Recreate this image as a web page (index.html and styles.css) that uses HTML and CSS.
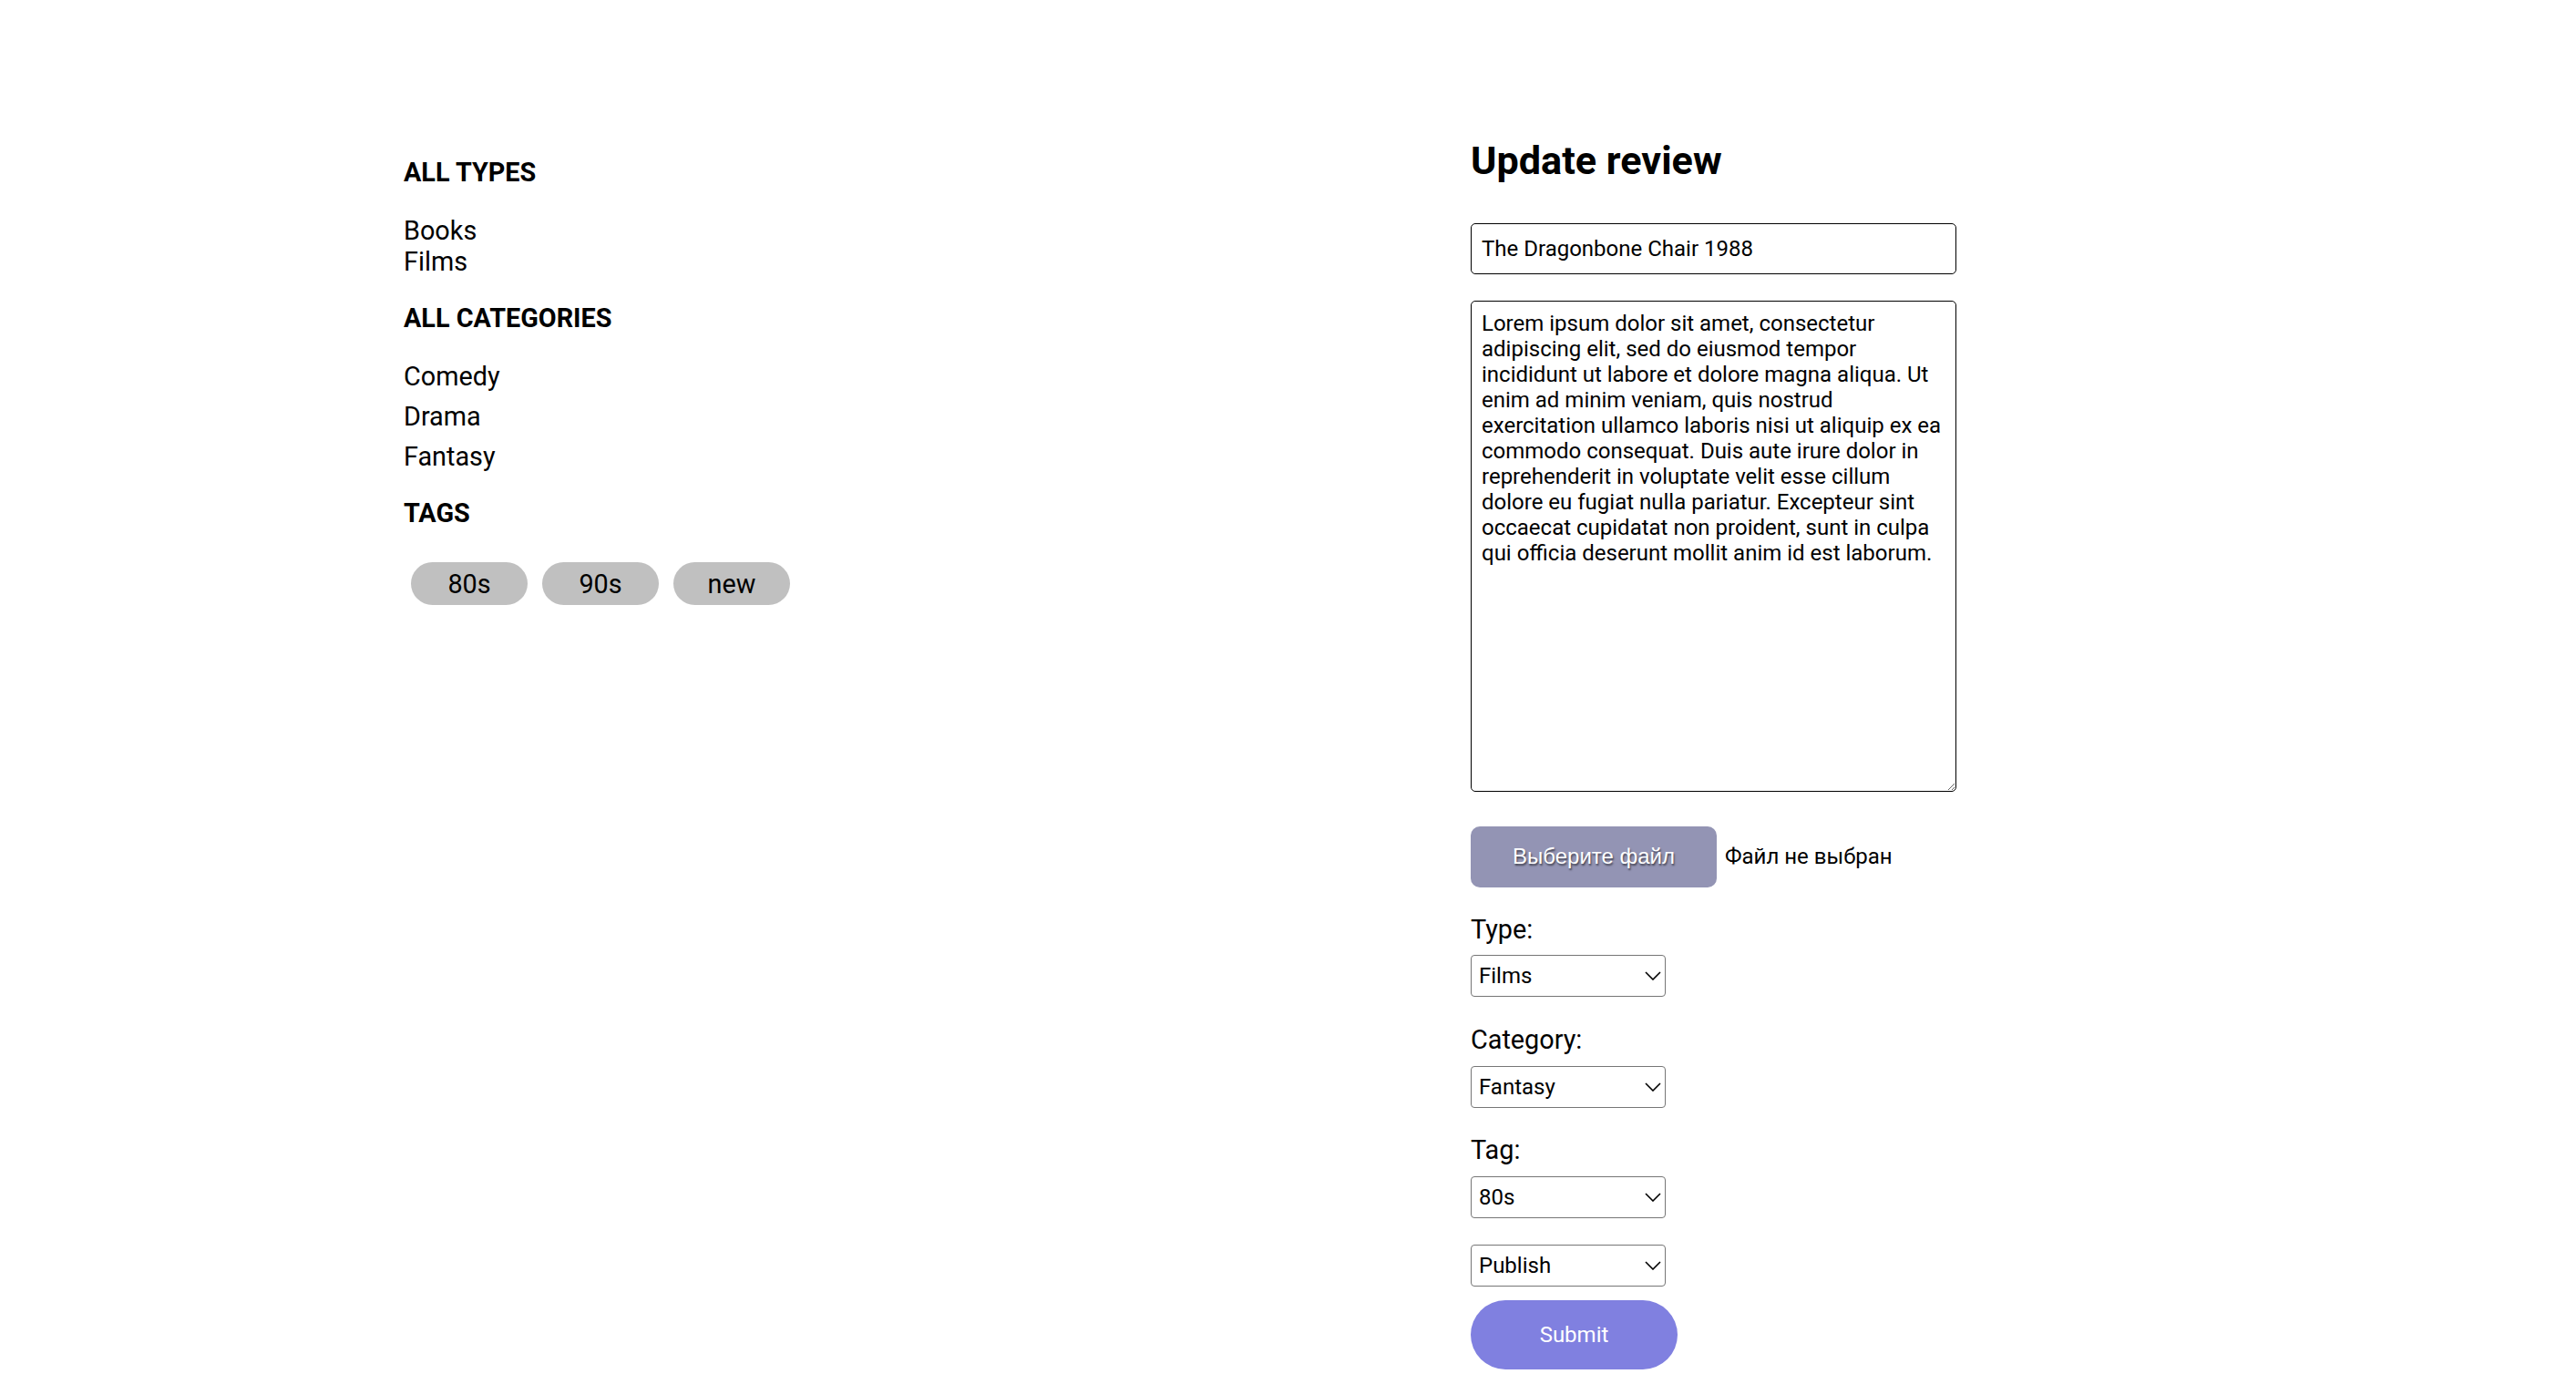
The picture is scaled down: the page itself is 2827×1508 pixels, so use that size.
FILE: index.html
```html
<!DOCTYPE html>
<html lang="en">
<head>
<meta charset="utf-8">
<title>Update review</title>
<link rel="stylesheet" href="styles.css">
</head>
<body>
<div class="page">
  <aside class="sidebar">
    <h3 class="side-title">ALL TYPES</h3>
    <ul class="type-list">
      <li>Books</li>
      <li>Films</li>
    </ul>
    <h3 class="side-title">ALL CATEGORIES</h3>
    <ul class="cat-list">
      <li>Comedy</li>
      <li>Drama</li>
      <li>Fantasy</li>
    </ul>
    <h3 class="side-title">TAGS</h3>
    <div class="tags">
      <span class="tag">80s</span>
      <span class="tag">90s</span>
      <span class="tag">new</span>
    </div>
  </aside>
  <main class="form-col">
    <h2 class="form-title">Update review</h2>
    <form class="review-form">
      <input class="text-input" type="text" value="The Dragonbone Chair 1988">
      <textarea class="text-area">Lorem ipsum dolor sit amet, consectetur adipiscing elit, sed do eiusmod tempor incididunt ut labore et dolore magna aliqua. Ut enim ad minim veniam, quis nostrud exercitation ullamco laboris nisi ut aliquip ex ea commodo consequat. Duis aute irure dolor in reprehenderit in voluptate velit esse cillum dolore eu fugiat nulla pariatur. Excepteur sint occaecat cupidatat non proident, sunt in culpa qui officia deserunt mollit anim id est laborum.</textarea>
      <div class="file-row">
        <span class="file-btn">Выберите файл</span>
        <span class="file-name">Файл не выбран</span>
      </div>
      <div class="field field-type">
        <label class="field-label">Type:</label>
        <div class="select-wrap">
          <select class="select"><option>Films</option><option>Books</option></select>
          <svg class="chev" viewBox="0 0 18 10" width="18" height="10"><path d="M1 1 L9 9 L17 1" fill="none" stroke="#000" stroke-width="1.6"/></svg>
        </div>
      </div>
      <div class="field field-cat">
        <label class="field-label">Category:</label>
        <div class="select-wrap">
          <select class="select"><option>Fantasy</option><option>Comedy</option><option>Drama</option></select>
          <svg class="chev" viewBox="0 0 18 10" width="18" height="10"><path d="M1 1 L9 9 L17 1" fill="none" stroke="#000" stroke-width="1.6"/></svg>
        </div>
      </div>
      <div class="field field-tag">
        <label class="field-label">Tag:</label>
        <div class="select-wrap">
          <select class="select"><option>80s</option><option>90s</option><option>new</option></select>
          <svg class="chev" viewBox="0 0 18 10" width="18" height="10"><path d="M1 1 L9 9 L17 1" fill="none" stroke="#000" stroke-width="1.6"/></svg>
        </div>
      </div>
      <div class="field field-tight">
        <div class="select-wrap">
          <select class="select"><option>Publish</option><option>Draft</option></select>
          <svg class="chev" viewBox="0 0 18 10" width="18" height="10"><path d="M1 1 L9 9 L17 1" fill="none" stroke="#000" stroke-width="1.6"/></svg>
        </div>
      </div>
      <button class="submit" type="button">Submit</button>
    </form>
  </main>
</div>
</body>
</html>
```

FILE: styles.css
```css
* { box-sizing: border-box; }
html, body { margin: 0; padding: 0; background: #fff; }
body {
  font-family: Roboto, "Noto Sans", Arial, sans-serif;
  color: #000;
}
.page {
  display: flex;
  align-items: flex-start;
  padding-left: 443px;
}
.sidebar {
  width: 1171px;
  flex: none;
  padding-top: 173px;
}
.side-title {
  margin: 0 0 29px;
  font-size: 28.8px;
  font-weight: 700;
  line-height: 33.75px;
}
.type-list, .cat-list {
  list-style: none;
  margin: 0 0 29px;
  padding: 0;
  font-size: 28.8px;
  line-height: 34px;
}
.cat-list li { margin-bottom: 10px; }
.cat-list li:last-child { margin-bottom: 0; }
.tags {
  display: flex;
  gap: 16px;
  padding-left: 8px;
  padding-top: 8px;
}
.tag {
  width: 128px;
  height: 47px;
  border-radius: 24px;
  background: #c0c0c0;
  font-size: 28.8px;
  display: flex;
  align-items: center;
  justify-content: center;
}
.form-col {
  width: 533px;
  flex: none;
  padding-top: 152px;
}
.form-title {
  margin: 0 0 42px;
  font-size: 43.2px;
  font-weight: 700;
  line-height: 50.6px;
}
.review-form {
  display: flex;
  flex-direction: column;
  align-items: flex-start;
}
.text-input {
  width: 533px;
  height: 56px;
  border: 1px solid #000;
  border-radius: 5px;
  padding: 0 11px;
  font-family: Roboto, sans-serif;
  font-size: 24px;
  color: #000;
  margin: 0 0 29px;
}
.text-area {
  width: 533px;
  height: 539px;
  border: 1px solid #000;
  border-radius: 5px;
  padding: 10px 11px;
  font-family: Roboto, sans-serif;
  font-size: 24px;
  line-height: 28.1px;
  color: #000;
  margin: 0 0 38px;
  resize: vertical;
}
.file-row {
  display: flex;
  align-items: center;
  gap: 9px;
  margin-bottom: 30px;
}
.file-btn {
  width: 270px;
  height: 67px;
  border-radius: 10px;
  background: #9394b4;
  color: #fff;
  font-family: "Liberation Sans", Arial, sans-serif;
  font-size: 24px;
  text-shadow: 1px 2px 2px rgba(0,0,0,0.55);
  display: flex;
  align-items: center;
  justify-content: center;
}
.file-name {
  font-size: 24px;
}
.field {
  display: flex;
  flex-direction: column;
}
.field-type { margin-bottom: 31px; }
.field-cat { margin-bottom: 30px; }
.field-tag { margin-bottom: 29px; }
.field-tight { margin-bottom: 15px; }
.field-label {
  font-size: 28.8px;
  line-height: 33.75px;
  margin-bottom: 11px;
}
.select-wrap {
  position: relative;
  width: 214px;
  height: 46px;
}
.select {
  -webkit-appearance: none;
  appearance: none;
  width: 214px;
  height: 46px;
  border: 1px solid #767676;
  border-radius: 4px;
  background: #fff;
  padding: 0 8px;
  font-family: Roboto, sans-serif;
  font-size: 24px;
  color: #000;
}
.chev {
  position: absolute;
  right: 5px;
  top: 18px;
  pointer-events: none;
}
.submit {
  width: 227px;
  height: 76px;
  border: none;
  border-radius: 38px;
  background: #8080e0;
  color: #fff;
  font-family: Roboto, sans-serif;
  font-size: 24px;
  padding: 0;
}
```
